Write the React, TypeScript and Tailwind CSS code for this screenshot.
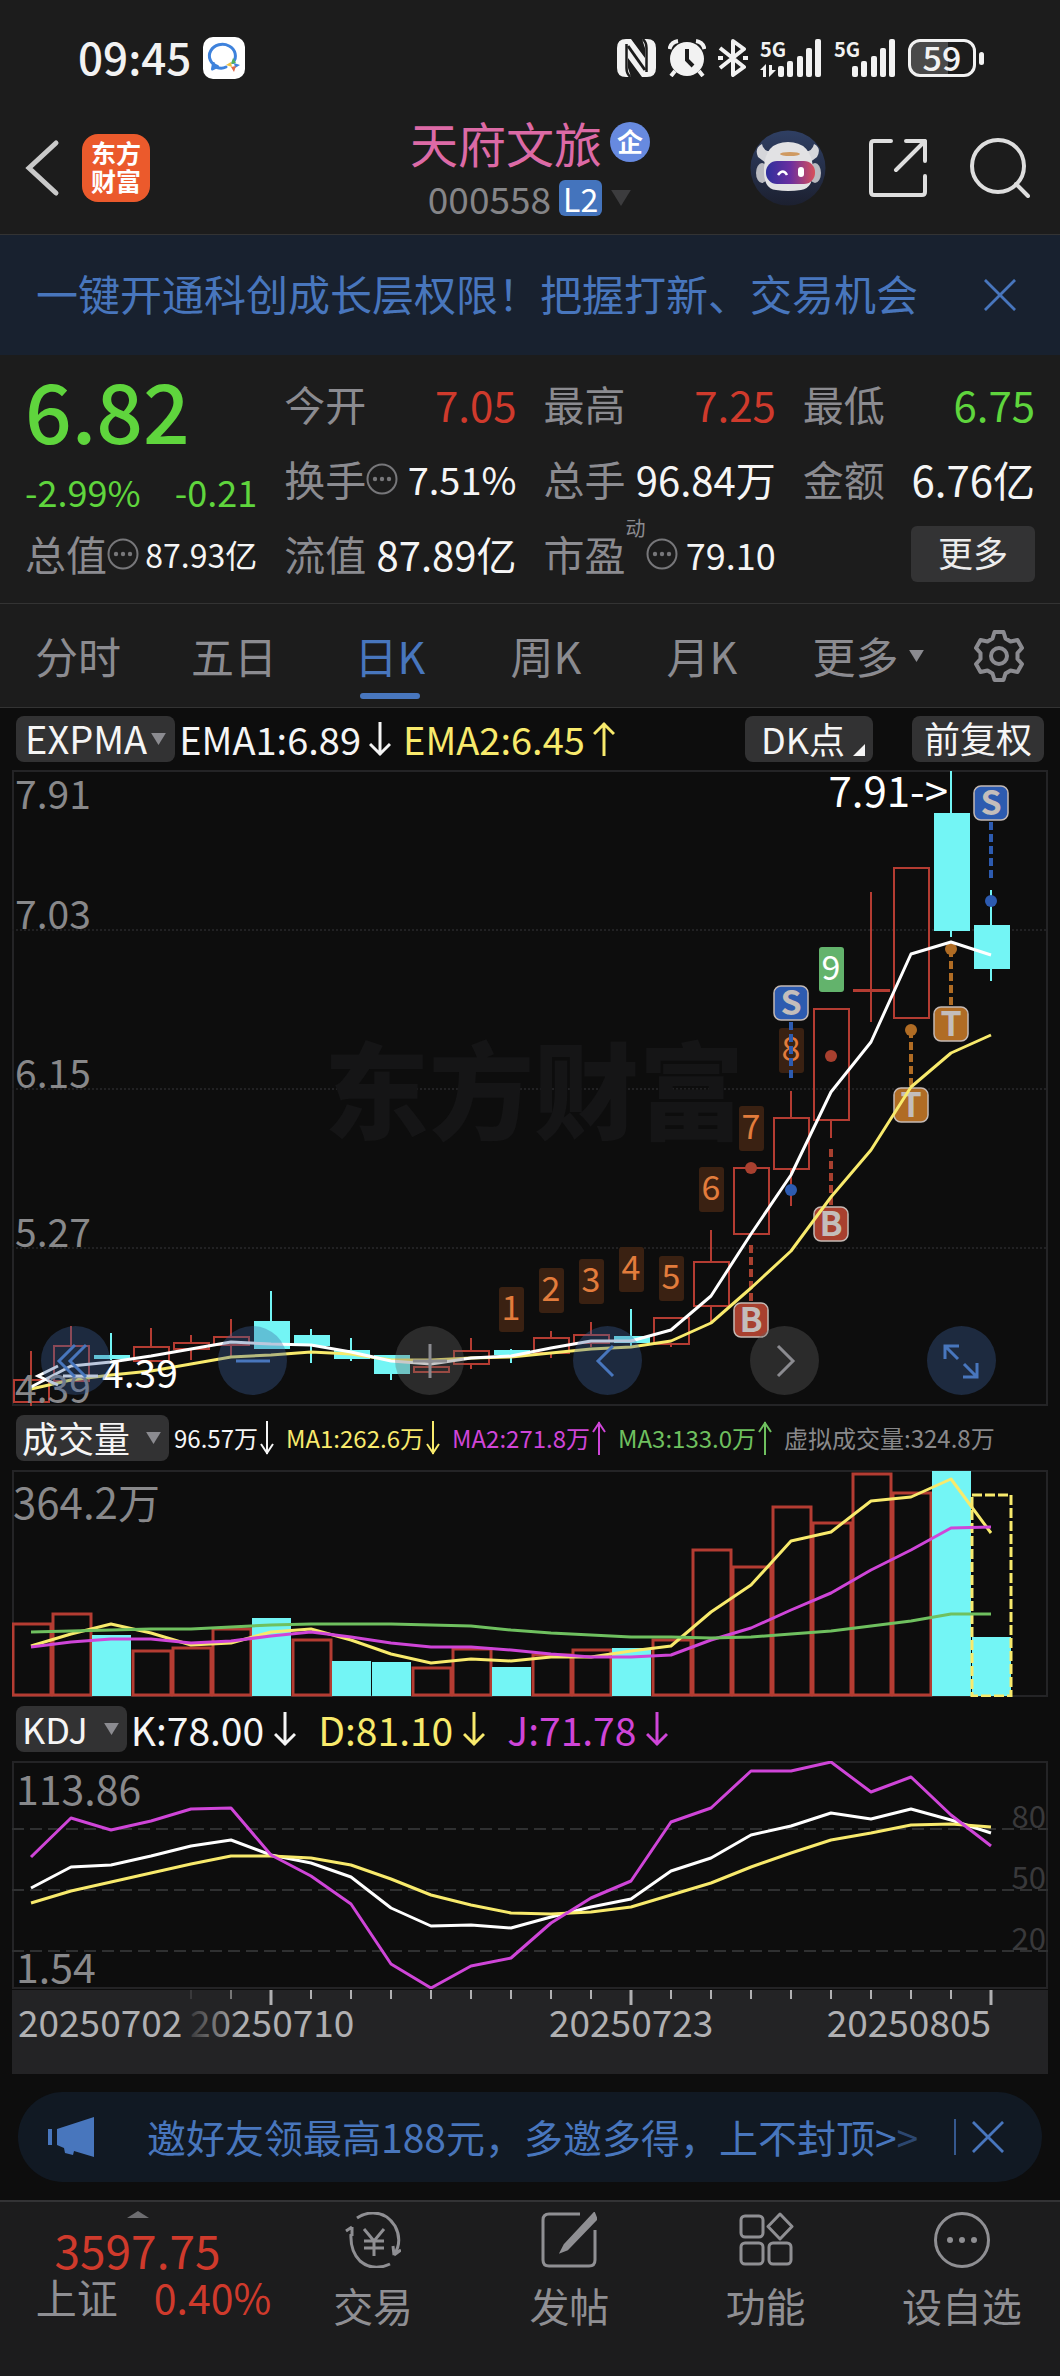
import React from "react";

// horizontal position of the n-th trading day inside a chart
const dayX = (i: number) => 19 + i * 40;

const toPoints = (values: number[]) => values.map((y, i) => `${dayX(i)},${y}`).join(" ");

const RED = "#b43c32";
const CYAN = "#73f5f5";
const YELLOW = "#f8ea6c";
const MAGENTA = "#cf45d8";
const GREEN = "#6fc05f";

type Candle = { high: number; top: number; bottom: number; low: number; up: boolean };

const candles: Candle[] = [
  { high: 581, top: 610, bottom: 632, low: 636, up: true },
  { high: 556, top: 576, bottom: 611, low: 611, up: true },
  { high: 563, top: 586, bottom: 588, low: 590, up: false },
  { high: 558, top: 577, bottom: 591, low: 591, up: true },
  { high: 565, top: 573, bottom: 579, low: 590, up: true },
  { high: 549, top: 567, bottom: 575, low: 588, up: true },
  { high: 521, top: 552, bottom: 578, low: 579, up: false },
  { high: 559, top: 566, bottom: 575, low: 593, up: false },
  { high: 568, top: 581, bottom: 588, low: 591, up: false },
  { high: 586, top: 586, bottom: 603, low: 610, up: false },
  { high: 597, top: 597, bottom: 602, low: 602, up: true },
  { high: 568, top: 581, bottom: 594, low: 599, up: true },
  { high: 579, top: 581, bottom: 584, low: 593, up: false },
  { high: 561, top: 568, bottom: 583, low: 588, up: true },
  { high: 552, top: 565, bottom: 573, low: 577, up: true },
  { high: 539, top: 567, bottom: 572, low: 576, up: false },
  { high: 548, top: 548, bottom: 574, low: 577, up: true },
  { high: 460, top: 492, bottom: 536, low: 553, up: true },
  { high: 398, top: 398, bottom: 464, low: 464, up: true },
  { high: 321, top: 348, bottom: 399, low: 436, up: true },
  { high: 239, top: 239, bottom: 350, low: 368, up: true },
  { high: 122, top: 220, bottom: 221, low: 252, up: true },
  { high: 98, top: 98, bottom: 248, low: 248, up: true },
  { high: 1, top: 44, bottom: 160, low: 167, up: false },
  { high: 120, top: 156, bottom: 198, low: 211, up: false },
];

const ema1 = [617, 596, 592, 586, 579, 572, 574, 575, 582, 591, 594, 588, 586, 578, 571, 571, 560, 526, 464, 405, 322, 272, 184, 172, 185];
const ema2 = [619, 610, 605, 601, 594, 587, 585, 582, 584, 590, 590, 588, 587, 583, 579, 577, 571, 553, 518, 481, 427, 380, 317, 283, 265];

const priceLabels = [
  { text: "7.91", y: 39 },
  { text: "7.03", y: 159 },
  { text: "6.15", y: 318 },
  { text: "5.27", y: 477 },
  { text: "4.39", y: 633 },
];

const countTags = [
  { day: 12, y: 517 },
  { day: 13, y: 498 },
  { day: 14, y: 489 },
  { day: 15, y: 477 },
  { day: 16, y: 486 },
  { day: 17, y: 397 },
  { day: 18, y: 336 },
  { day: 19, y: 258 },
  { day: 20, y: 177 },
];

const signals = [
  { day: 19, letter: "S", y: 215, dot: 420, dash: [252, 308], fill: "#2d5bb0" },
  { day: 24, letter: "S", y: 15, dot: 131, dash: [52, 108], fill: "#2d5bb0" },
  { day: 18, letter: "B", y: 532, dot: 398, dash: [475, 531], fill: "#a8402f" },
  { day: 20, letter: "B", y: 436, dot: 286, dash: [379, 435], fill: "#a8402f" },
  { day: 22, letter: "T", y: 317, dot: 260, dash: [260, 316], fill: "#b06c24" },
  { day: 23, letter: "T", y: 236, dot: 179, dash: [179, 235], fill: "#b06c24" },
];

const volumes = [
  { y: 154, up: true }, { y: 144, up: true }, { y: 165, up: false }, { y: 181, up: true }, { y: 178, up: true },
  { y: 159, up: true }, { y: 148, up: false }, { y: 170, up: true }, { y: 191, up: false }, { y: 192, up: false },
  { y: 198, up: true }, { y: 179, up: true }, { y: 197, up: false }, { y: 185, up: true }, { y: 180, up: true },
  { y: 178, up: false }, { y: 170, up: true }, { y: 80, up: true }, { y: 97, up: true }, { y: 37, up: true },
  { y: 53, up: true }, { y: 4, up: true }, { y: 23, up: true }, { y: 1, up: false }, { y: 167, up: false },
];
const volMa1 = [176, 164, 154, 163, 175, 173, 162, 159, 170, 184, 193, 189, 191, 187, 187, 181, 176, 142, 115, 71, 62, 31, 27, 9, 63];
const volMa2 = [177, 172, 169, 169, 173, 171, 166, 162, 167, 173, 177, 177, 180, 184, 187, 187, 185, 170, 158, 140, 123, 100, 80, 58, 57];
const volMa3 = [162, 161, 160, 159, 159, 157, 155, 154, 154, 154, 155, 156, 160, 163, 165, 167, 167, 168, 167, 164, 161, 156, 151, 144, 144];

const kLine = [127, 106, 104, 95, 85, 79, 94, 102, 116, 147, 165, 164, 167, 156, 146, 138, 110, 97, 74, 65, 52, 58, 48, 59, 72];
const dLine = [142, 130, 121, 112, 103, 95, 95, 97, 104, 118, 134, 144, 152, 153, 151, 146, 134, 122, 106, 92, 79, 72, 64, 63, 66];
const jLine = [96, 57, 69, 60, 48, 47, 94, 115, 143, 203, 227, 205, 197, 162, 137, 120, 61, 47, 10, 10, 1, 31, 16, 54, 85];

const Triangle = ({ className = "" }: { className?: string }) => (
  <svg viewBox="0 0 16 13" className={className} aria-hidden="true">
    <path d="M0 0h16L8 13z" fill="currentColor" />
  </svg>
);

const Arrow = ({ up = false }: { up?: boolean }) => (
  <svg viewBox="0 0 22 36" className="h-9 w-[22px] shrink-0" fill="none" stroke="currentColor" strokeWidth="3" aria-hidden="true">
    <path d={up ? "M11 35V2M1 13L11 3l10 10" : "M11 1v33M1 23l10 10 10-10"} />
  </svg>
);

const NarrowArrow = ({ up = false }: { up?: boolean }) => (
  <svg viewBox="0 0 14 36" className="h-9 w-[14px] shrink-0" fill="none" stroke="currentColor" strokeWidth="2" aria-hidden="true">
    <path d={up ? "M7 35V2M1 12l6-9 6 9" : "M7 1v33M1 24l6 9 6-9"} />
  </svg>
);

const Close = ({ className = "" }: { className?: string }) => (
  <svg viewBox="0 0 34 34" className={className} fill="none" stroke="currentColor" strokeWidth="3" aria-hidden="true">
    <path d="M1 1l32 32M33 1L1 33" />
  </svg>
);

const InfoDots = () => (
  <svg viewBox="0 0 32 32" className="size-8 shrink-0 text-[#77777a]" fill="none" stroke="currentColor" strokeWidth="2" aria-hidden="true">
    <circle cx="16" cy="16" r="14.5" />
    <g fill="currentColor" stroke="none">
      <circle cx="9" cy="16" r="2.2" />
      <circle cx="16" cy="16" r="2.2" />
      <circle cx="23" cy="16" r="2.2" />
    </g>
  </svg>
);

const Signal = ({ data = false }: { data?: boolean }) => (
  <div className="relative">
    <svg viewBox="0 0 62 39" className="w-[62px] h-[39px]" fill="#f2f2f2" aria-hidden="true">
      <rect x="18" y="27" width="6" height="11" rx="2" />
      <rect x="27" y="22" width="6" height="16" rx="2" />
      <rect x="37" y="17" width="6" height="21" rx="2" />
      <rect x="46" y="9" width="6" height="29" rx="2" />
      <rect x="55" y="0" width="6" height="38" rx="2" />
      {data && <path d="M0 31l6-6v13H3v-7zM9 26h3v5h4l-7 7z" />}
    </svg>
    <span className="absolute left-0 top-0 text-[20px] leading-none font-bold">5G</span>
  </div>
);

const StatusBar = () => (
  <div className="flex items-center justify-between pl-[78px] pr-[76px] py-9 text-[#f2f2f2]">
    <div className="flex items-center gap-3">
      <span className="pb-1 text-[44px] leading-10 font-medium">09:45</span>
      <svg viewBox="0 0 42 42" className="size-[42px]" fill="none" aria-hidden="true">
        <rect width="42" height="42" rx="10" fill="#fff" />
        <path d="M30 25.500A13 11.500 0 1 0 14.500 29.500L9.500 32l1-5.500" stroke="#3e82dc" strokeWidth="3" strokeLinecap="round" strokeLinejoin="round" />
        <path d="M14 30.500q5 1.500 9-.5" stroke="#3e82dc" strokeWidth="3" strokeLinecap="round" />
        <path d="M30 21l3 5-5 1z" fill="#54b45a" />
        <path d="M37 28l-5 3-1-5z" fill="#3e82dc" />
        <path d="M31 35l-3-5 5-1z" fill="#e26a48" />
        <path d="M23 28l5-3 1 5z" fill="#efc13e" />
      </svg>
    </div>
    <div className="flex items-center gap-3">
      <svg viewBox="0 0 39 38" className="w-[39px] h-[38px]" fill="#f2f2f2" aria-hidden="true">
        <path d="M9 0h5l14 19V9l-3-9h5q9 0 9 9v20q0 9-9 9h-5L11 19v10l3 9H9q-9 0-9-9V9q0-9 9-9z" />
        <path d="M9.500 5v24q0 6 4 9M29.500 33V9q0-6-4-9" stroke="#1c1c1c" strokeWidth="2.500" fill="none" />
        <path d="M11 7l17 24" stroke="#1c1c1c" strokeWidth="3" />
      </svg>
      <svg viewBox="0 0 38 38" className="size-[38px]" fill="none" stroke="#f2f2f2" strokeWidth="4" aria-hidden="true">
        <circle cx="19" cy="20" r="17" fill="#f2f2f2" stroke="none" />
        <path d="M1.500 10Q3 3 10 2M36.500 10Q35 3 28 2M7 32l-4 5M31 32l4 5" />
        <path d="M19 10v11l6 6" stroke="#1c1c1c" />
      </svg>
      <svg viewBox="0 0 30 38" className="w-[30px] h-[38px]" fill="none" stroke="#f2f2f2" strokeWidth="4" aria-hidden="true">
        <path d="M2 9l24 19-11 8V2l11 8L2 29" strokeLinejoin="round" />
        <path d="M0 19h5M25 19h5" />
      </svg>
      <Signal data />
      <Signal />
      <div className="flex items-center gap-[3px]">
        <div className="flex h-[38px] w-[68px] items-center justify-center rounded-xl border-3 border-[#f2f2f2] bg-linear-to-r from-[#4a4a4a] from-59% to-[#1c1c1c] to-59% pb-[2px] text-[34px] leading-none font-medium">
          59
        </div>
        <div className="h-[13px] w-[5px] rounded-full bg-[#f2f2f2]" />
      </div>
    </div>
  </div>
);

const Robot = () => (
  <svg viewBox="0 0 76 76" className="size-[76px]" aria-hidden="true">
    <defs>
      <linearGradient id="robotBg" x1="0" y1="0" x2="0" y2="1">
        <stop offset="0" stopColor="#2f3f63" />
        <stop offset="1" stopColor="#1c2030" />
      </linearGradient>
      <linearGradient id="robotVisor" x1="0" y1="0" x2="1" y2="0">
        <stop offset="0" stopColor="#2e2f9c" />
        <stop offset=".5" stopColor="#6a2fa0" />
        <stop offset="1" stopColor="#d8505a" />
      </linearGradient>
    </defs>
    <circle cx="38" cy="38" r="37.500" fill="url(#robotBg)" />
    <path d="M12 14q-8 4-4 13l8 6 8-12q-10 2-12-7zM64 14q8 4 3 13l-8 6-7-12q10 2 12-7z" fill="#d5d6da" />
    <ellipse cx="12" cy="43" rx="6" ry="10" fill="#b9bac0" />
    <ellipse cx="65" cy="43" rx="6" ry="10" fill="#b9bac0" />
    <path d="M38 12q-23 0-24 26-1 21 12 22 12 2 25 0 13-2 12-22-2-26-25-26z" fill="#e2e2e4" />
    <ellipse cx="40" cy="24" rx="10" ry="2" fill="#cf9a62" />
    <rect x="16" y="31" width="49" height="23" rx="11" fill="url(#robotVisor)" />
    <path d="M28 45q5-7 9 0" stroke="#fff" strokeWidth="2.500" fill="none" />
    <rect x="48" y="37" width="6" height="10" rx="3" fill="#fff" />
  </svg>
);

const Header = () => (
  <header className="grid grid-cols-[1fr_auto_1fr] items-center border-b border-[#333] px-6 pb-[14px]">
    <div className="flex items-center gap-[22px]">
      <button aria-label="返回" className="text-[#c9c9c9]">
        <svg viewBox="0 0 36 58" className="w-9 h-[58px]" fill="none" stroke="currentColor" strokeWidth="5" strokeLinecap="round">
          <path d="M32 4L5 29l27 25" />
        </svg>
      </button>
      <a href="#home" className="flex size-[68px] flex-col items-center justify-center rounded-2xl bg-[#eb5a2c] pb-1 text-[25px] leading-7 font-bold text-white">
        <span>东方</span>
        <span>财富</span>
      </a>
    </div>
    <div className="flex flex-col items-center gap-3 pb-1">
      <h1 className="flex items-center gap-2 text-[48px] leading-[52px] text-[#dc6aa6]">
        天府文旅
        <span className="flex size-10 items-center justify-center rounded-full bg-[#678ae0] pb-[2px] text-[26px] leading-none font-bold text-white">企</span>
      </h1>
      <div className="flex items-center gap-2 text-[37px] leading-9 text-[#858588]">
        <span>000558</span>
        <span className="rounded-md bg-[#4474bd] px-1 text-[32px] leading-9 text-white">L2</span>
        <Triangle className="w-[22px] h-4 text-[#3c3c3e]" />
      </div>
    </div>
    <div className="flex items-center justify-end gap-[43px] pr-[6px] text-[#dedede]">
      <button aria-label="智能助手"><Robot /></button>
      <button aria-label="分享">
        <svg viewBox="0 0 58 58" className="size-[58px]" fill="none" stroke="currentColor" strokeWidth="4" strokeLinecap="round" strokeLinejoin="round">
          <path d="M22 2H5q-3 0-3 3v48q0 3 3 3h48q3 0 3-3V37M37 2h19v20M56 2L27 31" />
        </svg>
      </button>
      <button aria-label="搜索">
        <svg viewBox="0 0 60 60" className="size-[60px]" fill="none" stroke="currentColor" strokeWidth="4" strokeLinecap="round">
          <circle cx="28" cy="28" r="26" />
          <path d="M46 46l12 12" />
        </svg>
      </button>
    </div>
  </header>
);

type QuoteProps = {
  label: string;
  value: string;
  info?: boolean;
  sup?: string;
  size?: string;
  color?: string;
};

const Quote = ({ label, value, info, sup, size = "text-[42px]", color = "text-[#f5f5f5]" }: QuoteProps) => (
  <div className="flex h-[75px] items-center justify-between whitespace-nowrap leading-none">
    <dt className="flex items-center text-[41px] text-[#8b8b90]">
      {label}
      {sup && <sup className="mb-8 text-[20px] leading-none">{sup}</sup>}
      {info && <InfoDots />}
    </dt>
    <dd className={`${size} ${color}`}>{value}</dd>
  </div>
);

const Quotes = () => (
  <section className="border-b border-[#333] px-[25px] pt-[11px] pb-3">
    <dl className="grid grid-cols-4 gap-x-[27px]">
      <div className="row-span-2 flex flex-col justify-center gap-7 text-[#5fd53d]">
        <div className="text-[82px] leading-[72px] font-medium">6.82</div>
        <div className="flex justify-between text-[36px] leading-9">
          <span>-2.99%</span>
          <span>-0.21</span>
        </div>
      </div>
      <Quote label="今开" value="7.05" color="text-[#cf3a2c]" />
      <Quote label="最高" value="7.25" color="text-[#cf3a2c]" />
      <Quote label="最低" value="6.75" color="text-[#5fd53d]" />
      <Quote label="换手" value="7.51%" info size="text-[38px]" />
      <Quote label="总手" value="96.84万" size="text-[40px]" />
      <Quote label="金额" value="6.76亿" />
      <Quote label="总值" value="87.93亿" info size="text-[32px]" />
      <Quote label="流值" value="87.89亿" size="text-[40px]" />
      <Quote label="市盈" sup="动" value="79.10" info size="text-[36px]" />
      <div className="flex items-center justify-end">
        <button className="h-14 rounded-md bg-[#333334] px-[27px] pb-1 text-[35px] leading-none text-[#ececec]">更多</button>
      </div>
    </dl>
  </section>
);

const tabs = ["分时", "五日", "日K", "周K", "月K", "更多"];

const Tabs = () => (
  <nav className="flex items-center border-b border-[#333] pr-[35px] text-[43px] leading-none text-[#8b8b90]">
    <div role="tablist" className="grid flex-1 grid-cols-6">
      {tabs.map((tab) => {
        const active = tab === "日K";
        const more = tab === "更多";
        return (
          <button
            key={tab}
            role="tab"
            aria-selected={active}
            className={`flex h-[103px] flex-col items-center justify-end gap-4 pb-2 ${active ? "text-[#4876bd]" : ""}`}
          >
            <span className={`flex items-center gap-[10px] ${more ? "pl-5" : ""}`}>
              {tab}
              {more && <Triangle className="w-[15px] h-3" />}
            </span>
            <span className={`h-[6px] w-[60px] rounded-full ${active ? "bg-[#4876bd]" : ""}`} />
          </button>
        );
      })}
    </div>
    <button aria-label="设置" className="ml-[37px]">
      <svg viewBox="0 0 52 52" className="size-[52px]" fill="none" stroke="currentColor" strokeWidth="4" strokeLinejoin="round">
        <path d="M21.500 2h9l2 6.500 5 3 7-1.500 4.500 8-4.500 5v6l4.500 5-4.500 8-7-1.500-5 3-2 6.500h-9l-2-6.500-5-3-7 1.500-4.500-8 4.500-5v-6l-4.500-5 4.500-8 7 1.500 5-3z" />
        <circle cx="26" cy="26" r="8" />
      </svg>
    </button>
  </nav>
);

const Picker = ({ label, tight = false }: { label: string; tight?: boolean }) => (
  <button
    className={`flex h-[46px] shrink-0 items-center rounded-lg bg-[#323233] leading-none text-[#f5f5f5] ${
      tight ? "gap-1 px-[9px] text-[38px]" : "gap-4 pl-[6px] pr-2 text-[36px]"
    }`}
  >
    <span className="pb-[2px]">{label}</span>
    <Triangle className="w-[15px] h-3 text-[#8b8b90]" />
  </button>
);

const Frame = ({ height }: { height: number }) => (
  <rect x="1" y="1" width="1034" height={height - 2} fill="none" stroke="#242426" strokeWidth="2" />
);

const PriceChart = () => (
  <svg viewBox="0 0 1036 636" className="block w-full" role="img" aria-label="日K线">
    <Frame height={636} />
    {[160, 319, 478].map((y) => (
      <line key={y} x1="0" x2="1036" y1={y} y2={y} stroke="#212123" strokeWidth="2" strokeDasharray="2 2" />
    ))}
    <text x="312" y="361" fontSize="105" fontWeight="900" fill="#151516">东方财富</text>
    {candles.map((c, i) => {
      const x = dayX(i);
      const color = c.up ? RED : CYAN;
      return (
        <g key={i} stroke={color} strokeWidth="2">
          <line x1={x} x2={x} y1={c.high} y2={c.top} />
          <line x1={x} x2={x} y1={c.bottom} y2={c.low} />
          <rect
            x={c.up ? x - 17 : x - 16}
            y={c.top}
            width={c.up ? 35 : 34}
            height={c.bottom - c.top}
            fill={c.up ? "none" : color}
          />
        </g>
      );
    })}
    {countTags.map((t, i) => {
      const last = i === 8;
      return (
        <g key={t.day}>
          <rect x={dayX(t.day) - 12} y={t.y} width="25" height="45" rx="3" fill={last ? "#63b36c" : "#3a2112"} />
          <text x={dayX(t.day)} y={t.y + 33} fontSize="34" textAnchor="middle" fill={last ? "#fff" : "#e27c3c"}>
            {i + 1}
          </text>
        </g>
      );
    })}
    {signals.map((s) => (
      <g key={s.day}>
        <line x1={dayX(s.day)} x2={dayX(s.day)} y1={s.dash[0]} y2={s.dash[1]} stroke={s.fill} strokeWidth="4" strokeDasharray="8 4" />
        <circle cx={dayX(s.day)} cy={s.dot} r="6" fill={s.fill} />
        <rect x={dayX(s.day) - 17} y={s.y + 1} width="34" height="34" rx="7" fill={s.fill} stroke="#c4b9b4" strokeWidth="1.500" />
        <text x={dayX(s.day)} y={s.y + 30} fontSize="34" fontWeight="700" textAnchor="middle" fill="#c3bdbb">
          {s.letter}
        </text>
      </g>
    ))}
    <g fill="none" strokeWidth="3" strokeLinejoin="round">
      <polyline points={toPoints(ema2)} stroke={YELLOW} />
      <polyline points={toPoints(ema1)} stroke="#fff" />
    </g>
    <g fontSize="39" fill="#88888a">
      {priceLabels.map((l) => (
        <text key={l.text} x="3" y={l.y}>{l.text}</text>
      ))}
    </g>
    <g fill="#fff">
      <text x="936" y="37" fontSize="42" textAnchor="end">7.91-&gt;</text>
      <text x="90" y="618" fontSize="39">4.39</text>
    </g>
    <path d="M46 596l-20 10 20 9M51 606h35" fill="none" stroke="#fff" strokeWidth="3" />
  </svg>
);

const chartControls = [
  { name: "快退", icon: "M21 6L5 22l16 16M32 6L16 22l16 16", blue: true },
  { name: "缩小", icon: "M5 22h34", blue: true },
  { name: "放大", icon: "M5 22h34M22 5v34", blue: false },
  { name: "左移", icon: "M28 7L13 22l15 15", blue: true },
  { name: "右移", icon: "M16 7l15 15-15 15", blue: false },
  { name: "全屏", icon: "M6 20V7h14M7 8l12 12M38 24v14H24M37 37L25 25", blue: true },
];

const ChartControls = () => (
  <div className="absolute inset-x-0 bottom-[11px] flex justify-between pl-[29px] pr-[52px]">
    {chartControls.map((c) => (
      <button
        key={c.name}
        aria-label={c.name}
        className={`flex size-[69px] items-center justify-center rounded-full ${
          c.blue ? "bg-[#3b609f]/35 text-[#4876bd]" : "bg-[#636363]/35 text-[#8b8b90]"
        }`}
      >
        <svg viewBox="0 0 44 44" className="size-11" fill="none" stroke="currentColor" strokeWidth="3">
          <path d={c.icon} />
        </svg>
      </button>
    ))}
  </div>
);

const VolumeChart = () => (
  <svg viewBox="0 0 1036 227" className="block w-full" role="img" aria-label="成交量">
    <Frame height={227} />
    {volumes.map((v, i) =>
      v.up ? (
        <rect key={i} x={i * 40 + 1} y={v.y} width="38" height={225 - v.y} fill="none" stroke={RED} strokeWidth="3" />
      ) : (
        <rect key={i} x={i * 40} y={v.y} width="39" height={226 - v.y} fill={CYAN} />
      )
    )}
    <rect x="960" y="25" width="39" height="201" fill="none" stroke={YELLOW} strokeWidth="3" strokeDasharray="10 3" />
    <g fill="none" strokeWidth="3" strokeLinejoin="round">
      <polyline points={toPoints(volMa1)} stroke={YELLOW} />
      <polyline points={toPoints(volMa2)} stroke={MAGENTA} />
      <polyline points={toPoints(volMa3)} stroke={GREEN} />
    </g>
    <text x="1" y="49" fontSize="42" fill="#88888a">364.2万</text>
  </svg>
);

const KdjChart = () => (
  <svg viewBox="0 0 1036 228" className="block w-full" role="img" aria-label="KDJ">
    <Frame height={228} />
    {[80, 50, 20].map((level, i) => {
      const y = 68 + i * 61;
      return (
        <g key={level}>
          <line x1="0" x2="1036" y1={y} y2={y} stroke="#2f3031" strokeWidth="2" strokeDasharray="12 6" />
          <text x="1034" y={y - 1} fontSize="31" textAnchor="end" fill="#39393b">{level}</text>
        </g>
      );
    })}
    <g fill="none" strokeWidth="3" strokeLinejoin="round">
      <polyline points={toPoints(kLine)} stroke="#fff" />
      <polyline points={toPoints(dLine)} stroke={YELLOW} />
      <polyline points={toPoints(jLine)} stroke={MAGENTA} />
    </g>
    <g fontSize="41" fill="#88888a">
      <text x="4" y="44">113.86</text>
      <text x="4" y="222">1.54</text>
    </g>
  </svg>
);

const DateAxis = () => (
  <svg viewBox="0 0 1036 84" className="mt-px block w-full bg-[#232325]" role="img" aria-label="日期">
    <defs>
      <linearGradient id="dateFade">
        <stop offset="0" stopColor="#3a3a3c" />
        <stop offset=".3" stopColor="#b0b0b2" />
      </linearGradient>
    </defs>
    {Array.from({ length: 21 }, (_, n) => n + 4).map((i) => {
      const major = i === 6 || i === 15 || i === 24;
      return (
        <line
          key={i}
          x1={dayX(i)}
          x2={dayX(i)}
          y1="0"
          y2={major ? 15 : 9}
          stroke={i === 4 ? "#39393b" : i === 5 ? "#777" : "#b0b0b2"}
          strokeWidth={major ? 3 : 2}
        />
      );
    })}
    <g fontSize="37" fill="#b0b0b2">
      <text x="6" y="47">20250702</text>
      <text x="178" y="47" fill="url(#dateFade)">20250710</text>
      <text x="537" y="47">20250723</text>
      <text x="979" y="47" textAnchor="end">20250805</text>
    </g>
  </svg>
);

const Charts = () => (
  <main className="px-3">
    <div className="flex h-[62px] items-center justify-between px-1">
      <div className="flex items-center gap-1 text-[38px] leading-none">
        <Picker label="EXPMA" tight />
        <span className="flex items-center gap-2 text-[#f5f5f5]">EMA1:6.89<Arrow /></span>
        <span className="ml-2 flex items-center gap-2 text-[#f8ea6c]">EMA2:6.45<Arrow up /></span>
      </div>
      <div className="flex gap-[39px] text-[36px] leading-none text-[#f5f5f5]">
        <button className="flex h-[46px] items-center gap-2 rounded-lg bg-[#323233] pb-[2px] pl-4 pr-2">
          DK点
          <svg viewBox="0 0 12 12" className="mt-6 size-3" aria-hidden="true">
            <path d="M12 0v12H0z" fill="currentColor" />
          </svg>
        </button>
        <button className="h-[46px] rounded-lg bg-[#323233] px-3 pb-1">前复权</button>
      </div>
    </div>
    <div className="relative">
      <PriceChart />
      <ChartControls />
    </div>

    <div className="flex h-16 items-center pl-1">
      <Picker label="成交量" />
      <div className="flex items-center gap-3 pl-[5px] text-[24px] leading-none whitespace-nowrap">
        <span className="flex items-center gap-[2px] text-[#f5f5f5]">96.57万<NarrowArrow /></span>
        <span className="flex items-center gap-[2px] text-[#f8ea6c]">MA1:262.6万<NarrowArrow /></span>
        <span className="flex items-center gap-[2px] text-[#cf45d8]">MA2:271.8万<NarrowArrow up /></span>
        <span className="flex items-center gap-[2px] text-[#6fc05f]">MA3:133.0万<NarrowArrow up /></span>
        <span className="text-[#88888a]">虚拟成交量:324.8万</span>
      </div>
    </div>
    <VolumeChart />

    <div className="flex h-16 items-center pl-1">
      <Picker label="KDJ" />
      <div className="flex items-center gap-[22px] pl-1 text-[39px] leading-none">
        <span className="flex items-center gap-[10px] text-[#f5f5f5]">K:78.00<Arrow /></span>
        <span className="flex items-center gap-[10px] text-[#f8ea6c]">D:81.10<Arrow /></span>
        <span className="flex items-center gap-[10px] text-[#cf45d8]">J:71.78<Arrow /></span>
      </div>
    </div>
    <KdjChart />
    <DateAxis />
  </main>
);

const Promo = () => (
  <aside className="mx-[18px] my-[18px] flex h-[90px] items-center rounded-full bg-[#111923] pl-[30px] pr-[38px] text-[#4876bd]">
    <svg viewBox="0 0 46 40" className="h-10 w-[46px]" fill="currentColor" aria-hidden="true">
      <path d="M0 12h4v16H0zM9 12L46 0v40l-20-6-1 4-8-2-1-5-7-3z" />
    </svg>
    <a href="#invite" className="ml-[53px] flex-1 pb-[2px] text-[39px] leading-none whitespace-nowrap">
      邀好友领最高188元，多邀多得，上不封顶&gt;<span className="opacity-50">&gt;</span>
    </a>
    <div className="mr-4 h-9 w-[2px] bg-[#35588f]" />
    <button aria-label="关闭推广"><Close className="size-8" /></button>
  </aside>
);

const navItems = [
  {
    name: "交易",
    icon: (
      <>
        <path d="M12 6Q19 1 28 1q14 0 22 13 8 15-1 29M7 15l-6 4M7 15v9M6 22q-1 17 9 27 13 11 30 3M49 43l7-5M49 43l-1-9" />
        <path d="M19 17l10 12 10-12M29 29v15M19 29h20M19 36h20" />
      </>
    ),
  },
  {
    name: "发帖",
    icon: (
      <>
        <path d="M39 2H8q-6 0-6 6v40q0 6 6 6h40q6 0 6-6V18" />
        <path d="M53 2L24 33l-3 6 5-2L55 7z" fill="currentColor" />
      </>
    ),
  },
  {
    name: "功能",
    icon: (
      <>
        <rect x="3" y="4" width="22" height="21" rx="4" />
        <rect x="3" y="31" width="22" height="21" rx="4" />
        <rect x="31" y="31" width="22" height="21" rx="4" />
        <path d="M42 2l12 12.500L42 27 30 14.500z" strokeLinejoin="round" />
      </>
    ),
  },
  {
    name: "设自选",
    icon: (
      <>
        <circle cx="28" cy="28" r="26.500" />
        <g fill="currentColor" stroke="none">
          <circle cx="16" cy="28" r="3" />
          <circle cx="28" cy="28" r="3" />
          <circle cx="40" cy="28" r="3" />
        </g>
      </>
    ),
  },
];

const BottomNav = () => (
  <nav className="flex grow border-t-2 border-[#333335] bg-[#1c1c1d] pb-8 leading-none text-[#8f8f93]">
    <a href="#index" className="flex w-[275px] flex-col items-center pt-[9px]">
      <svg viewBox="0 0 22 7" className="h-[7px] w-[22px]" aria-hidden="true">
        <path d="M0 7L11 0l11 7z" fill="#6d6d70" />
      </svg>
      <span className="mt-2 text-[46px] text-[#cf3a2c]">3597.75</span>
      <span className="mt-1 flex gap-9 pl-8 text-[41px]">
        上证 <span className="text-[#cf3a2c]">0.40%</span>
      </span>
    </a>
    {navItems.map((item) => (
      <a key={item.name} href="#" className="flex flex-1 flex-col items-center gap-[17px] pt-[10px] text-[40px]">
        <svg viewBox="0 0 56 56" className="size-14" fill="none" stroke="currentColor" strokeWidth="3" aria-hidden="true">
          {item.icon}
        </svg>
        {item.name}
      </a>
    ))}
  </nav>
);

const App: React.FC = () => {
  return (
    <div className="flex min-h-screen flex-col bg-[#0d0d0d] font-['Noto_Sans_CJK_SC',sans-serif]">
      <div className="bg-[#1c1c1c]">
        <StatusBar />
        <Header />
        <div className="flex h-[120px] items-center justify-between bg-[#18212f] pl-9 pr-11 text-[42px] leading-none text-[#4876bd]">
          <a href="#star" className="pb-1">一键开通科创成长层权限！把握打新、交易机会</a>
          <button aria-label="关闭"><Close className="size-8" /></button>
        </div>
        <Quotes />
        <Tabs />
      </div>
      <Charts />
      <Promo />
      <BottomNav />
    </div>
  );
};

export default App;
